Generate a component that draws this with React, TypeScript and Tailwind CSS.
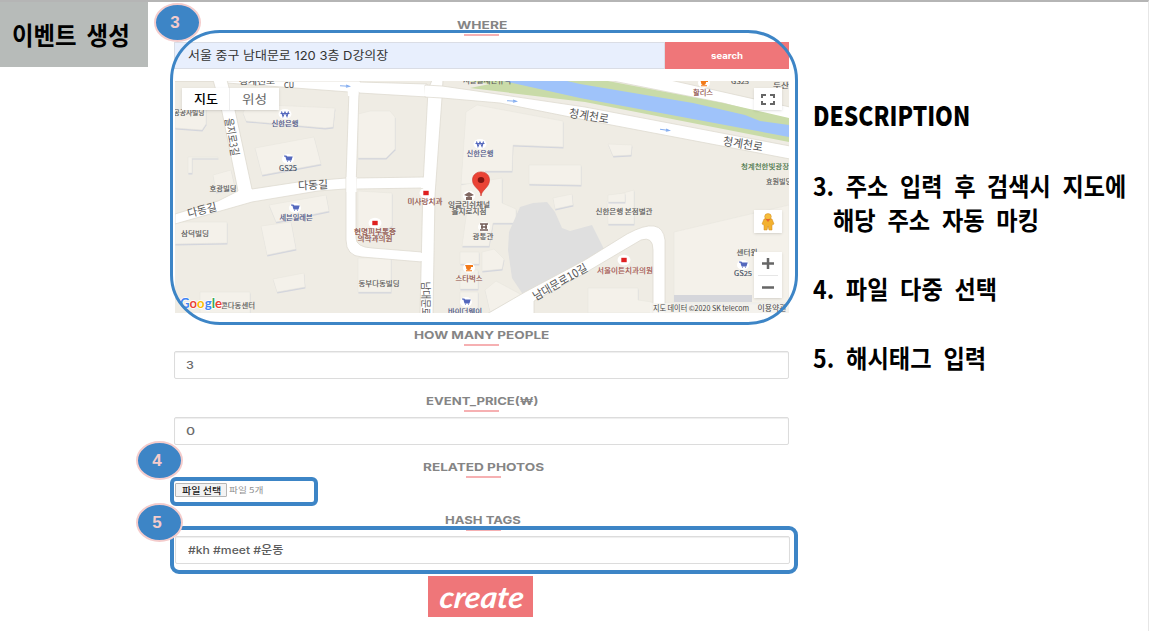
import { useLayoutEffect, useRef, useState, type ReactNode } from "react";

const KR = "font-['Inter','Noto_Sans_CJK_KR',sans-serif]";

/** Stretches a single line of text horizontally to a fixed width. */
function Fit({ w, className = "", children }: { w: number; className?: string; children: ReactNode }) {
  const ref = useRef<HTMLSpanElement>(null);
  const [scale, setScale] = useState(1);
  useLayoutEffect(() => {
    if (ref.current) setScale(w / ref.current.offsetWidth);
  }, [w]);
  return (
    <span className={`block shrink-0 ${className}`} style={{ width: w }}>
      <span ref={ref} className="inline-block origin-left whitespace-pre" style={{ transform: `scaleX(${scale})` }}>
        {children}
      </span>
    </span>
  );
}

function Heading({ text, w, className = "" }: { text: string; w: number; className?: string }) {
  return (
    <div className={`flex flex-col items-center ${className}`}>
      <Fit w={w} className={`${KR} h-[18px] text-[11px] leading-[18px] font-bold text-[#858585]`}>
        {text}
      </Fit>
      <div className="h-[2px] w-[35px] bg-[#f6b0b2]" />
    </div>
  );
}

function Field({ children, className = "" }: { children: ReactNode; className?: string }) {
  return (
    <div className={`flex h-[28px] w-[615px] shrink-0 items-center rounded-[2px] border border-[#dcdcdc] bg-white shadow-[inset_0_1px_1px_#eeeeee] ${className}`}>
      {children}
    </div>
  );
}

function Badge({ n, className }: { n: number; className: string }) {
  return (
    <div className={`absolute flex h-[39px] w-[47px] items-center justify-center rounded-[50%] border-2 border-[#f4cccc] bg-[#3d85c6] pr-[5px] font-['Liberation_Sans',sans-serif] text-[17px] font-bold text-[#f4cccc] ${className}`}>
      {n}
    </div>
  );
}

type LabelProps = { x: number; y: number; w: number; s?: number; c?: string; r?: number; o?: number; children: string };
function Label({ x, y, w, s = 7, c = "#555555", r = 0, o = 0.35, children }: LabelProps) {
  return (
    <text
      x={x}
      y={y}
      dy="0.36em"
      textAnchor="middle"
      textLength={w}
      lengthAdjust="spacingAndGlyphs"
      fontSize={s}
      fill={c}
      stroke={c}
      strokeWidth={o * 0.4}
      transform={r ? `rotate(${r} ${x} ${y})` : undefined}
    >
      {children}
    </text>
  );
}

function Cart({ x, y }: { x: number; y: number }) {
  return (
    <g transform={`translate(${x} ${y})`}>
      <ellipse rx="6" ry="5" fill="#fff" />
      <path d="M-4 -3h2l1 1h5l-1 3h-4l-1-3M-1 2.4h.6M2 2.4h.6" fill="#5468bd" stroke="#5468bd" strokeWidth="1.1" />
    </g>
  );
}

function Bank({ x, y }: { x: number; y: number }) {
  return (
    <g transform={`translate(${x} ${y})`}>
      <ellipse rx="6.5" ry="5" fill="#fff" />
      <path d="M-3.5 -2.5l1.5 5 2-4.5 2 4.5 1.5-5M-4.5 -.5h9" fill="none" stroke="#5468bd" strokeWidth="1.1" />
    </g>
  );
}

function Cup({ x, y }: { x: number; y: number }) {
  return (
    <g transform={`translate(${x} ${y})`}>
      <ellipse rx="6" ry="5" fill="#fff" />
      <path d="M-4 -3h8v2h-2q0 3-2 3h-1q-2 0-2-3zM-3 2.3h6v1h-6z" fill="#f27a1a" />
    </g>
  );
}

function Clinic({ x, y }: { x: number; y: number }) {
  return (
    <g transform={`translate(${x} ${y})`}>
      <ellipse rx="6.5" ry="5.2" fill="#fff" />
      <path d="M-2.7 -2.2h5.4v4.4h-5.4z" fill="#df2020" />
    </g>
  );
}

function Arrow({ x, y, r = 4 }: { x: number; y: number; r?: number }) {
  return (
    <path d="M-5 0H4M1 -1.2L4.5 0L1 1.2" transform={`translate(${x} ${y}) rotate(${r})`} fill="none" stroke="#85aef0" strokeWidth="1" />
  );
}

const buildings = [
  "175,114 206,108 206,124 202,130 175,128",
  "243,113 247,104 335,108 333,127 325,128 246,121",
  "255,148 314,137 321,164 262,175",
  "358,114 370,111 390,111 395,117 395,149 386,158 358,158",
  "466,112 477,105 563,121 563,147 513,145 512,171 485,171 485,184 461,184",
  "529,165 581,165 581,185 529,184",
  "461,185 502,178 502,203 516,209 516,223 493,223 489,246 462,246 467,210 461,207",
  "460,252 479,252 479,264 460,264",
  "482,252 494,249 504,259 502,269 482,271",
  "460,270 478,270 478,289 460,289",
  "460,292 478,292 478,313 460,313",
  "485,290 496,281 522,295 490,312",
  "608,144 632,145 631,155 613,156",
  "607,201 616,195 634,190 634,224 608,224",
  "608,202 608,195 625,193 625,202",
  "213,175 231,170 235,188 216,192",
  "269,205 326,195 329,211 276,222",
  "175,222 227,222 227,243 175,244",
  "261,226 291,222 296,249 267,255",
  "273,279 304,273 305,287 277,292",
  "200,292 250,292 250,313 200,313",
  "358,191 392,193 392,226 373,238 358,236",
  "358,258 391,258 391,292 358,292",
  "588,288 638,288 638,300 652,302 652,313 588,313",
  "674,232 789,205 789,303 674,303",
  "553,198 572,194 573,205 555,209",
  "188,157 218,157 218,158 192,158 192,173 188,173",
];

function MapView() {
  return (
    <div className="relative ml-px h-[232px] w-[614px] shrink-0 overflow-hidden">
      <svg viewBox="175 81 614 232" className="block h-[232px] w-[614px] font-['Noto_Sans_CJK_KR',sans-serif]">
        <rect x="175" y="81" width="614" height="232" fill="#efece4" />
        {buildings.map((p) => (
          <g key={p}>
            <polygon points={p} fill="#d3d5dd" transform="translate(.4 1.4)" />
            <polygon points={p} fill="#f4f1ea" stroke="#e7e4dc" strokeWidth=".5" />
          </g>
        ))}
        <polygon points="674,295 752,295 752,302 674,302" fill="#d5d6db" />
        <path d="M520 207L533 203L547 202L555 212L562 228L570 231L592 225L604 249L524 296L512 278L508 250L509 232Z" fill="#dfdfdf" />

        <g fill="#ffffff" stroke="#dedad1" strokeWidth=".8">
          <polygon points="175,81 235,81 360,81 360,82 427,84 427,97 359,93 349,92 227,83 213,81" />
          <polygon points="213,80 227,80 235,110 252,189 298,182 346,178 355,178 423,177 423,188 356,189 345,189 318,191 252,202 175,224 175,214 218,201 238,191 222,112" />
          <path d="M349 90L346 178V240Q346 256 362 257L422 262V252L372 248Q356 247 356 238V189L359 92Z" />
          <path d="M432 80H443L442 98L435 195L433 314H420L423 185L428 90Z" />
          <polygon points="425,85 442,86 470,90 585,107 790,146 790,159 585,120 500,103 442,98 425,97" />
          <polygon points="608,80 670,80 790,107 790,121 723,103" />
          <path d="M487 314L525 292L585 260L627 234Q662 215 665 240V314H653V250Q653 236 641 240L585 273L534 301V314Z" />
        </g>
        <g fill="#fff">
          <polygon points="347,82 360,82 358,97 348,96" />
          <polygon points="346.5,177 356.5,177 356.5,192 346.5,192" />
          <polygon points="421,178 430,176 430,188 421,188" />
          <polygon points="425,86 446,88 446,97 424,96" />
          <polygon points="418,253 428,253 428,261 418,261" />
        </g>

        <polygon points="467,81 608,81 723,103 789,118 789,142 585,102 470,88 490,84" fill="#c9dba8" />
        <path d="M503 81H567L580 84L693 103L745 115L760 121L789 125V137L580 98Z" fill="#9fc3fa" />

        <Arrow x={345} y={86} />
        <Arrow x={512} y={101} />
        <Arrow x={665} y={130} r={8} />

        <Label x={257} y={81} w={36} s={8}>청계천로</Label>
        <Label x={289} y={85} w={10} s={8}>CU</Label>
        <Label x={487} y={80.5} w={48} s={8}>서울콜재단뮤직</Label>
        <Label x={703} y={92} w={20} c="#8a493f">할리스</Label>
        <Label x={740} y={81} w={18}>GS25</Label>
        <Label x={781} y={85} w={16}>두산</Label>
        <Label x={189} y={112} w={31}>공공사빌딩</Label>
        <Label x={285} y={123} w={27} c="#465084">신한은행</Label>
        <Label x={288} y={168} w={18} s={7.5} c="#3c4a60">GS25</Label>
        <Label x={223} y={188} w={27}>호광빌딩</Label>
        <Label x={232} y={137} w={38} s={11} r={80} o={0}>을지로3길</Label>
        <Label x={313} y={185} w={30} s={11} r={-3} o={0}>다동길</Label>
        <Label x={202} y={210} w={30} s={11} r={-14} o={0}>다동길</Label>
        <Label x={589} y={116} w={40} s={11.5} r={9} o={0}>청계천로</Label>
        <Label x={743} y={144} w={40} s={11.5} r={9} o={0}>청계천로</Label>
        <Label x={195} y={233} w={28}>삼덕빌딩</Label>
        <Label x={296} y={217} w={33} c="#465084">세븐일레븐</Label>
        <Label x={375} y={232} w={42} s={6.5} c="#8a493f">현명피부통증</Label>
        <Label x={375} y={239} w={35} s={6.5} c="#8a493f">의학과의원</Label>
        <Label x={425} y={201} w={35} c="#8a493f">미사랑치과</Label>
        <Label x={480} y={153} w={27} c="#465084">신한은행</Label>
        <Label x={469} y={205} w={42} s={6.5}>잉글리쉬채널</Label>
        <Label x={469} y={212} w={35} s={6.5}>을지로지점</Label>
        <Label x={483} y={236} w={21}>광통관</Label>
        <Label x={469} y={278} w={27} c="#8a493f">스타벅스</Label>
        <Label x={465} y={311} w={34} c="#465084">바이더웨이</Label>
        <Label x={379} y={283} w={41}>동부다동빌딩</Label>
        <Label x={238} y={305} w={34}>콘다동센터</Label>
        <Label x={624} y={211} w={57}>신한은행 본점별관</Label>
        <Label x={625} y={270} w={56} c="#a2524d">서울이튼치과의원</Label>
        <Label x={765} y={166} w={48} c="#3f7041">청계천한빛광장</Label>
        <Label x={779} y={181} w={26}>효원빌딩</Label>
        <Label x={747} y={252} w={21}>센터원</Label>
        <Label x={743} y={273} w={18} c="#3c4a60">GS25</Label>
        <Label x={560} y={282} w={61} s={11.5} r={-30} o={0}>남대문로10길</Label>
        {["남", "대", "문", "로"].map((t, i) => (
          <Label key={t} x={426} y={286 + i * 8.7} w={9} s={10} r={90} o={0}>{t}</Label>
        ))}

        <Bank x={285} y={114} />
        <Bank x={480} y={144} />
        <Cart x={288} y={159} />
        <Cart x={295} y={208} />
        <Cart x={466} y={302} />
        <Cart x={743} y={265} />
        <Cup x={704} y={83} />
        <Cup x={469} y={268} />
        <Clinic x={375} y={223} />
        <Clinic x={426} y={193} />
        <Clinic x={624} y={260} />
        <ellipse cx="469" cy="196" rx="6" ry="5" fill="#fff" />
        <path d="M464 195l5-3 5 3-5 2zM466 197h6v3h-6z" fill="#806761" />
        <ellipse cx="484" cy="227" rx="6" ry="5" fill="#fff" />
        <path d="M480 224h8M482 224v5M486 224v5M480 230h8M481 227h6" fill="none" stroke="#735c58" strokeWidth="1.5" />

        <path d="M481 196C481 189 473 188 472.5 180.5C472 169 490 169 489.5 180.5C489 188 481.5 190 481 196Z" fill="#ea4335" stroke="#ca3128" strokeWidth=".6" />
        <ellipse cx="481" cy="180" rx="3.3" ry="2.9" fill="#811411" />

        <polygon points="650,303 789,303 789,313 650,313" fill="#f5f4f0" opacity=".75" />
        <Label x={701} y={308} w={96} s={7.5} c="#444444" o={0}>지도 데이터 ©2020 SK telecom</Label>
        <Label x={772} y={308} w={29} s={7.5} c="#444444" o={0}>이용약관</Label>
        <text x="180" y="308" textLength="42" lengthAdjust="spacingAndGlyphs" fontSize="12.5" fontWeight="700" stroke="#ffffff" strokeWidth="1.4" paintOrder="stroke" className="font-['Lato',sans-serif]">
          <tspan fill="#4285f4">G</tspan>
          <tspan fill="#ea4335">o</tspan>
          <tspan fill="#fbbc05">o</tspan>
          <tspan fill="#4285f4">g</tspan>
          <tspan fill="#34a853">l</tspan>
          <tspan fill="#ea4335">e</tspan>
        </text>
      </svg>

      <div className="absolute top-[7px] left-[7px] flex h-[22px] w-[97px] bg-white shadow-sm">
        <div className="flex w-[48px] items-center justify-center border-r border-[#eeeeee] font-['Noto_Sans_CJK_KR',sans-serif] text-[12px] leading-none font-medium text-black">
          <Fit w={24}>지도</Fit>
        </div>
        <div className="flex flex-1 items-center justify-center font-['Noto_Sans_CJK_KR',sans-serif] text-[12px] leading-none text-[#666666]">
          <Fit w={25}>위성</Fit>
        </div>
      </div>
      <div className="absolute top-[7px] left-[579px] flex h-[22px] w-[28px] items-center justify-center bg-white shadow-sm">
        <svg viewBox="0 0 14 11" className="h-[11px] w-[14px]" fill="none" stroke="#666666" strokeWidth="2">
          <path d="M1 4V1H5M9 1H13V4M13 7V10H9M5 10H1V7" />
        </svg>
      </div>
      <div className="absolute top-[129px] left-[579px] flex h-[23px] w-[28px] items-center justify-center bg-white shadow-sm">
        <svg viewBox="0 0 14 18" className="h-[18px] w-[14px]">
          <path d="M3 6Q7 4 11 6L13 11L11 12V17H8L7 13L6 17H3V12L1 11Z" fill="#f3b12f" stroke="#cf8920" strokeWidth=".5" />
          <ellipse cx="7" cy="3.6" rx="3.3" ry="3" fill="#f7bd3c" stroke="#cf8920" strokeWidth=".5" />
          <path d="M4.5 6L7 9L9.5 6Z" fill="#e5672c" />
        </svg>
      </div>
      <div className="absolute top-[171px] left-[579px] flex h-[46px] w-[28px] flex-col items-center bg-white shadow-sm">
        <svg viewBox="0 0 28 46" className="h-[46px] w-[28px]" fill="none" stroke="#666666" strokeWidth="2.5">
          <path d="M8 11.5H20M14 6V17M8 35.5H20" />
          <path d="M4 23.5H24" stroke="#e6e6e6" strokeWidth="1" />
        </svg>
      </div>
    </div>
  );
}

export default function App() {
  return (
    <div className="relative flex h-[631px] w-[1149px] items-start overflow-hidden border-t-2 border-r border-t-[#b5b5b5] border-r-[#e6e6e6] bg-white">
      <div className="-mt-[2px] flex h-[67px] w-[148px] shrink-0 items-center bg-[#b7bbb9] pl-[12px]">
        <Fit w={118} className="font-['Noto_Sans_CJK_KR',sans-serif] text-[25px] leading-[36px] font-bold [word-spacing:5px] text-black">
          이벤트 생성
        </Fit>
      </div>

      <main className="ml-[26px] flex w-[615px] shrink-0 flex-col pt-[14px]">
        <Heading text="WHERE" w={50} />
        <div className="mt-[6px] mb-[12px] flex h-[27px]">
          <div className={`${KR} flex w-[491px] items-center border border-[#dadde5] bg-[#e8effd] pl-[13px] text-[12px] text-[#333333]`}>
            <Fit w={200}>서울 중구 남대문로 120 3층 D강의장</Fit>
          </div>
          <div className={`${KR} flex flex-1 items-center justify-center bg-[#ef7679] text-[9px] font-bold text-white`}>
            <Fit w={32}>search</Fit>
          </div>
        </div>
        <MapView />

        <Heading text="HOW MANY PEOPLE" w={135} className="mt-[13px]" />
        <Field className={`${KR} mt-[5px] pl-[11px] text-[11px] font-medium text-[#6c6c6c]`}>
          <Fit w={8}>3</Fit>
        </Field>

        <Heading text="EVENT_PRICE(₩)" w={112} className="mt-[13px]" />
        <Field className={`${KR} mt-[5px] pl-[11px] text-[11px] font-medium text-[#6c6c6c]`}>
          <Fit w={9}>0</Fit>
        </Field>

        <Heading text="RELATED PHOTOS" w={121} className="mt-[13px] ml-[3px]" />
        <div className="mt-[5px] ml-[1px] flex h-[14px] items-center font-['Noto_Sans_CJK_KR',sans-serif] text-[9px] leading-none">
          <div className="flex h-[14px] w-[52px] items-center justify-center rounded-[1px] border border-[#b5b5b5] bg-[#f3f3f3] font-medium text-[#222222]">
            <Fit w={39}>파일 선택</Fit>
          </div>
          <Fit w={34} className="ml-[2px] text-[8px] text-[#909090]">파일 5개</Fit>
        </div>

        <Heading text="HASH TAGS" w={76} className="mt-[14px] ml-[3px]" />
        <Field className={`${KR} mt-[5px] ml-[1px] pt-px pl-[12px] text-[11px] font-medium text-[#5c5c5c]`}>
          <Fit w={95}>#kh #meet #운동</Fit>
        </Field>

        <div className="mt-[12px] ml-[254px] flex h-[41px] w-[105px] items-center justify-center bg-[#ef7679] pb-[1px] pl-[3px]">
          <Fit w={84} className="-skew-x-6 font-['Lato',sans-serif] text-[30px] leading-[36px] font-bold text-white italic">create</Fit>
        </div>
      </main>

      <aside className="ml-[24px] pt-[96px] font-['Noto_Sans_CJK_KR',sans-serif] text-[25px] leading-[34px] font-bold [word-spacing:7px] text-black">
        <Fit w={157} className="h-[34px] text-[27px] font-black">DESCRIPTION</Fit>
        <Fit w={313} className="mt-[36px]">3. 주소 입력 후 검색시 지도에</Fit>
        <Fit w={206} className="ml-[20px]">해당 주소 자동 마킹</Fit>
        <Fit w={184} className="mt-[35px]">4. 파일 다중 선택</Fit>
        <Fit w={173} className="mt-[35px]">5. 해시태그 입력</Fit>
      </aside>

      <div className="absolute top-[28px] left-[170px] h-[295px] w-[628px] rounded-[50px] border-[3.5px] border-[#3d85c6]" />
      <div className="absolute top-[475px] left-[170px] h-[29px] w-[148px] rounded-[6px] border-4 border-[#3d85c6]" />
      <div className="absolute top-[524px] left-[170px] h-[48px] w-[628px] rounded-[9px] border-4 border-[#3d85c6]" />
      <Badge n={3} className="top-[1px] left-[154px]" />
      <Badge n={4} className="top-[439px] left-[136px]" />
      <Badge n={5} className="top-[501px] left-[136px]" />
    </div>
  );
}
